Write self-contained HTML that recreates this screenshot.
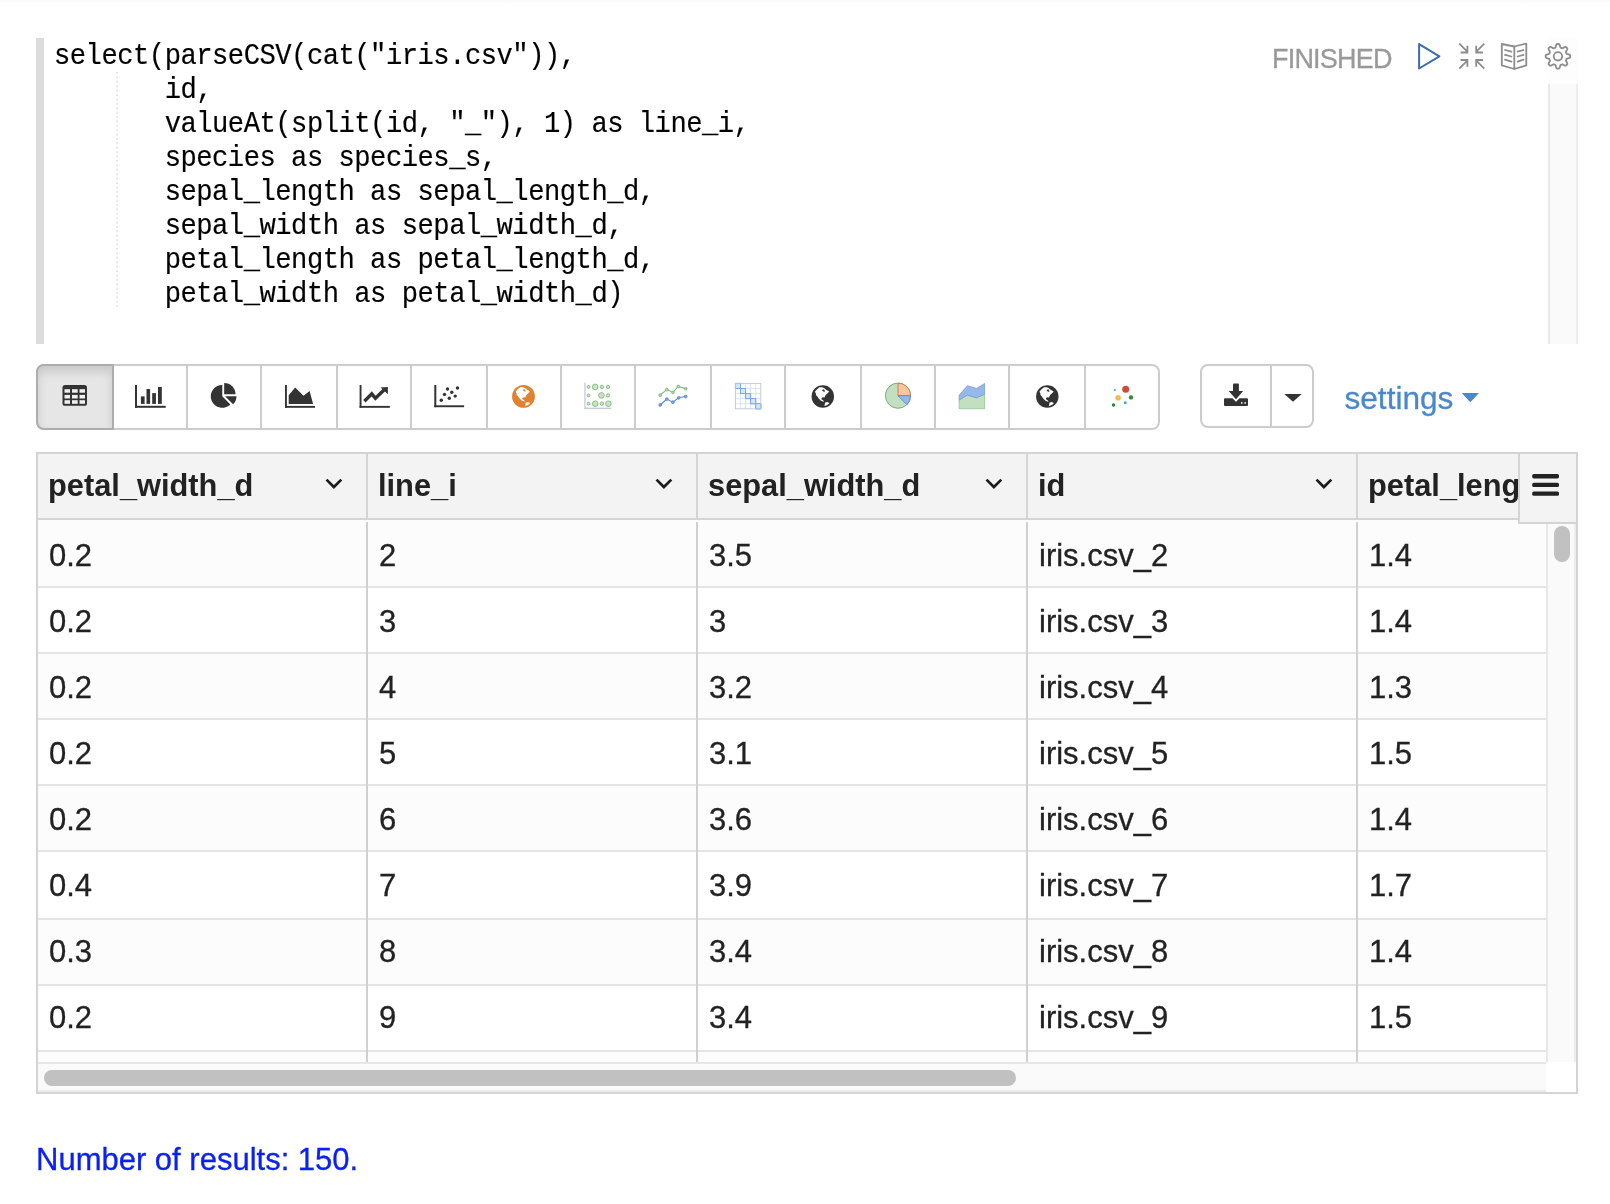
<!DOCTYPE html>
<html><head><meta charset="utf-8">
<style>
html,body{margin:0;padding:0;}
body{width:1610px;height:1204px;position:relative;overflow:hidden;background:#fff;font-family:"Liberation Sans",sans-serif;}
.a{position:absolute;}
#topshadow{left:0;top:0;width:1610px;height:6px;background:linear-gradient(#f8f8f8,#fdfdfd 3px,#fff 6px);}
#codebar{left:36px;top:38px;width:8px;height:306px;background:#dcdcdc;}
.cl{position:absolute;left:54px;height:34px;font-family:"Liberation Mono",monospace;font-size:27.2px;letter-spacing:-0.51px;line-height:34px;color:#000;white-space:pre;transform:scaleY(1.075);transform-origin:0 24px;-webkit-text-stroke:0.15px #000;}
#trackfaint{left:1548px;top:38px;width:30px;height:46px;background:#fdfdfd;}
#codetrack{left:1548px;top:84px;width:26px;height:260px;background:#fafafa;border-left:2px solid #e8e8e8;border-right:2px solid #ededed;}
#finished{left:1272px;top:41.5px;font-size:27px;line-height:34px;color:#999;letter-spacing:-0.8px;-webkit-text-stroke:0.3px #999;}
#toolbar{left:36px;top:364px;width:1120px;height:62px;border:2px solid #ccc;border-radius:8px;background:#fff;}
#activebtn{left:36px;top:364px;width:74px;height:62px;border:2px solid #adadad;border-radius:8px 0 0 8px;background:#e6e6e6;box-shadow:inset 0 6px 10px rgba(0,0,0,.125);}
.vd{position:absolute;top:366px;width:2px;height:62px;background:#ccc;}
#dlgroup{left:1200px;top:364px;width:110px;height:60px;border:2px solid #ccc;border-radius:8px;}
#settings{left:1344.5px;top:378px;font-size:31.6px;line-height:40px;color:#4a88c9;-webkit-text-stroke:0.3px #4a88c9;}
#grid{left:36px;top:452px;width:1538px;height:638px;border:2px solid #d4d4d4;background:#fff;overflow:hidden;}
.hd{position:absolute;top:454px;height:64px;background:#f3f3f3;}
.ht{position:absolute;top:466px;font-size:30.8px;line-height:40px;font-weight:bold;color:#222;white-space:nowrap;}
.ct{position:absolute;font-size:31px;line-height:40px;color:#222;white-space:nowrap;-webkit-text-stroke:0.3px #222;}
.rw{position:absolute;left:38px;width:1508px;}
.hb{position:absolute;left:38px;width:1508px;height:2px;background:#e4e4e4;}
.cd{position:absolute;width:2px;background:#d0d0d0;}
#results{left:36px;top:1139.7px;font-size:31px;line-height:40px;color:#0a20f5;-webkit-text-stroke:0.3px #0a20f5;}

#wrap{position:absolute;left:0;top:0;width:1610px;height:1204px;will-change:transform;}

</style></head>
<body>
<div id="wrap">
<div id="topshadow" class="a"></div>
<div id="codebar" class="a"></div>
<div class="cl" style="top:40px">select(parseCSV(cat("iris.csv")),</div>
<div class="cl" style="top:74px">       id,</div>
<div class="cl" style="top:108px">       valueAt(split(id, "_"), 1) as line_i,</div>
<div class="cl" style="top:142px">       species as species_s,</div>
<div class="cl" style="top:176px">       sepal_length as sepal_length_d,</div>
<div class="cl" style="top:210px">       sepal_width as sepal_width_d,</div>
<div class="cl" style="top:244px">       petal_length as petal_length_d,</div>
<div class="cl" style="top:278px">       petal_width as petal_width_d)</div>
<div id="trackfaint" class="a"></div>
<div id="codetrack" class="a"></div>
<div id="finished" class="a">FINISHED</div>
<div id="toolbar" class="a"></div>
<div id="activebtn" class="a"></div>
<div class="vd" style="left:186px"></div>
<div class="vd" style="left:260px"></div>
<div class="vd" style="left:336px"></div>
<div class="vd" style="left:410px"></div>
<div class="vd" style="left:486px"></div>
<div class="vd" style="left:560px"></div>
<div class="vd" style="left:634px"></div>
<div class="vd" style="left:710px"></div>
<div class="vd" style="left:784px"></div>
<div class="vd" style="left:860px"></div>
<div class="vd" style="left:934px"></div>
<div class="vd" style="left:1008px"></div>
<div class="vd" style="left:1084px"></div>
<div id="dlgroup" class="a"></div>
<div class="vd" style="left:1270px;height:60px"></div>
<div id="settings" class="a">settings</div>
<div id="grid" class="a"></div>
<div class="hd" style="left:38px;width:1538px"></div>
<div class="a" style="left:38px;top:518px;width:1480px;height:2px;background:#d4d4d4"></div>
<div class="rw" style="top:520px;height:66px;background:#fcfcfc"></div>
<div class="rw" style="top:588px;height:64px;background:#fff"></div>
<div class="rw" style="top:654px;height:64px;background:#fcfcfc"></div>
<div class="rw" style="top:720px;height:64px;background:#fff"></div>
<div class="rw" style="top:786px;height:64px;background:#fcfcfc"></div>
<div class="rw" style="top:852px;height:66px;background:#fff"></div>
<div class="rw" style="top:920px;height:64px;background:#fcfcfc"></div>
<div class="rw" style="top:986px;height:64px;background:#fff"></div>
<div class="rw" style="top:1052px;height:10px;background:#fcfcfc"></div>
<div class="hb" style="top:586px"></div>
<div class="hb" style="top:652px"></div>
<div class="hb" style="top:718px"></div>
<div class="hb" style="top:784px"></div>
<div class="hb" style="top:850px"></div>
<div class="hb" style="top:918px"></div>
<div class="hb" style="top:984px"></div>
<div class="hb" style="top:1050px"></div>
<div class="cd" style="left:366px;top:454px;height:64px;background:#d4d4d4"></div>
<div class="cd" style="left:366px;top:522px;height:540px"></div>
<div class="cd" style="left:696px;top:454px;height:64px;background:#d4d4d4"></div>
<div class="cd" style="left:696px;top:522px;height:540px"></div>
<div class="cd" style="left:1026px;top:454px;height:64px;background:#d4d4d4"></div>
<div class="cd" style="left:1026px;top:522px;height:540px"></div>
<div class="cd" style="left:1356px;top:454px;height:64px;background:#d4d4d4"></div>
<div class="cd" style="left:1356px;top:522px;height:540px"></div>
<div class="ht" style="left:48px;">petal_width_d</div>
<div class="ht" style="left:378px;">line_i</div>
<div class="ht" style="left:708px;">sepal_width_d</div>
<div class="ht" style="left:1038px;">id</div>
<div class="ht" style="left:1368px;width:150px;overflow:hidden;">petal_length_d</div>
<div class="ct" style="left:49px;top:535.5px">0.2</div>
<div class="ct" style="left:379px;top:535.5px">2</div>
<div class="ct" style="left:709px;top:535.5px">3.5</div>
<div class="ct" style="left:1039px;top:535.5px">iris.csv_2</div>
<div class="ct" style="left:1369px;top:535.5px">1.4</div>
<div class="ct" style="left:49px;top:601.5px">0.2</div>
<div class="ct" style="left:379px;top:601.5px">3</div>
<div class="ct" style="left:709px;top:601.5px">3</div>
<div class="ct" style="left:1039px;top:601.5px">iris.csv_3</div>
<div class="ct" style="left:1369px;top:601.5px">1.4</div>
<div class="ct" style="left:49px;top:667.5px">0.2</div>
<div class="ct" style="left:379px;top:667.5px">4</div>
<div class="ct" style="left:709px;top:667.5px">3.2</div>
<div class="ct" style="left:1039px;top:667.5px">iris.csv_4</div>
<div class="ct" style="left:1369px;top:667.5px">1.3</div>
<div class="ct" style="left:49px;top:733.5px">0.2</div>
<div class="ct" style="left:379px;top:733.5px">5</div>
<div class="ct" style="left:709px;top:733.5px">3.1</div>
<div class="ct" style="left:1039px;top:733.5px">iris.csv_5</div>
<div class="ct" style="left:1369px;top:733.5px">1.5</div>
<div class="ct" style="left:49px;top:799.5px">0.2</div>
<div class="ct" style="left:379px;top:799.5px">6</div>
<div class="ct" style="left:709px;top:799.5px">3.6</div>
<div class="ct" style="left:1039px;top:799.5px">iris.csv_6</div>
<div class="ct" style="left:1369px;top:799.5px">1.4</div>
<div class="ct" style="left:49px;top:865.5px">0.4</div>
<div class="ct" style="left:379px;top:865.5px">7</div>
<div class="ct" style="left:709px;top:865.5px">3.9</div>
<div class="ct" style="left:1039px;top:865.5px">iris.csv_7</div>
<div class="ct" style="left:1369px;top:865.5px">1.7</div>
<div class="ct" style="left:49px;top:931.5px">0.3</div>
<div class="ct" style="left:379px;top:931.5px">8</div>
<div class="ct" style="left:709px;top:931.5px">3.4</div>
<div class="ct" style="left:1039px;top:931.5px">iris.csv_8</div>
<div class="ct" style="left:1369px;top:931.5px">1.4</div>
<div class="ct" style="left:49px;top:997.5px">0.2</div>
<div class="ct" style="left:379px;top:997.5px">9</div>
<div class="ct" style="left:709px;top:997.5px">3.4</div>
<div class="ct" style="left:1039px;top:997.5px">iris.csv_9</div>
<div class="ct" style="left:1369px;top:997.5px">1.5</div>
<div class="a" style="left:1546px;top:524px;width:26px;height:538px;background:#fafafa;border-left:2px solid #e8e8e8;border-right:2px solid #ededed"></div>
<div class="a" style="left:1554px;top:526px;width:16px;height:36px;border-radius:8px;background:#c1c1c1"></div>
<div class="a" style="left:38px;top:1062px;width:1508px;height:26px;background:#fafafa;border-top:2px solid #e6e6e6;border-bottom:2px solid #ececec"></div>
<div class="a" style="left:44px;top:1070px;width:972px;height:16px;border-radius:8px;background:#c1c1c1"></div>
<div class="a" style="left:1546px;top:1062px;width:30px;height:30px;background:#fff"></div>
<div class="a" style="left:1518px;top:454px;width:56px;height:68px;background:#f3f3f3;border-left:2px solid #d4d4d4;border-bottom:2px solid #d4d4d4"></div>
<div id="results" class="a">Number of results: 150.</div>
<svg class="a" style="left:0;top:0" width="1610" height="1204" viewBox="0 0 1610 1204">
<!-- indent guide -->
<line x1="117" y1="72" x2="117" y2="307" stroke="#d2d2d2" stroke-width="1" stroke-dasharray="2 2.4"/>
<!-- play -->
<path d="M1419.1,44.1 L1439.4,56.3 L1419.1,68.5 Z" fill="none" stroke="#3a6ea8" stroke-width="2" stroke-linejoin="round"/>
<!-- compress -->
<g stroke="#8c8c8c" stroke-width="1.8" fill="none" stroke-linecap="butt">
<path d="M1459.3,43.7 L1467.3,51.7 M1467.4,45.8 L1467.4,52.5 L1460.6,52.5"/>
<path d="M1484.3,43.7 L1476.3,51.7 M1476.2,45.8 L1476.2,52.5 L1483,52.5"/>
<path d="M1459.3,68.7 L1467.3,60.7 M1460.6,60 L1467.4,60 L1467.4,66.7"/>
<path d="M1484.3,68.7 L1476.3,60.7 M1483,60 L1476.2,60 L1476.2,66.7"/>
</g>
<!-- book -->
<g stroke="#8c8c8c" stroke-width="1.8" fill="none" stroke-linejoin="round" stroke-linecap="round">
<path d="M1501.8,44 L1501.8,65.4 L1514.3,69 L1514.3,46.5 Z"/>
<path d="M1514.3,46.5 L1526.3,43.6 L1526.3,65.4 L1514.3,69"/>
<path d="M1505,50 L1511.4,51.6 M1505,54.9 L1511.4,56.5 M1505,59.7 L1511.4,61.7"/>
<path d="M1517.6,51.6 L1523.5,50 M1517.6,56.5 L1523.5,54.9 M1517.6,61.7 L1523.5,59.7"/>
</g>
<!-- gear -->
<path d="M1570.24,56.3 L1570.24,56.41 L1570.24,56.51 L1570.24,56.62 L1570.23,56.73 L1570.23,56.84 L1570.22,56.94 L1570.22,57.05 L1570.2,57.16 L1570.16,57.26 L1570.11,57.36 L1570.03,57.46 L1569.94,57.56 L1569.83,57.65 L1569.7,57.74 L1569.56,57.83 L1569.4,57.91 L1569.24,57.99 L1569.06,58.06 L1568.88,58.13 L1568.69,58.2 L1568.5,58.26 L1568.31,58.32 L1568.11,58.37 L1567.93,58.42 L1567.74,58.47 L1567.56,58.52 L1567.4,58.57 L1567.24,58.62 L1567.09,58.67 L1566.96,58.72 L1566.84,58.77 L1566.74,58.82 L1566.65,58.88 L1566.58,58.94 L1566.53,59.01 L1566.5,59.08 L1566.47,59.16 L1566.45,59.23 L1566.42,59.3 L1566.4,59.38 L1566.37,59.45 L1566.34,59.53 L1566.31,59.6 L1566.28,59.67 L1566.25,59.74 L1566.22,59.82 L1566.19,59.89 L1566.16,59.96 L1566.13,60.03 L1566.1,60.1 L1566.06,60.17 L1566.03,60.25 L1565.99,60.32 L1565.96,60.39 L1565.93,60.46 L1565.92,60.54 L1565.93,60.64 L1565.94,60.74 L1565.98,60.85 L1566.03,60.97 L1566.08,61.1 L1566.15,61.23 L1566.23,61.38 L1566.32,61.53 L1566.41,61.69 L1566.5,61.86 L1566.6,62.03 L1566.7,62.21 L1566.79,62.38 L1566.88,62.56 L1566.97,62.74 L1567.05,62.92 L1567.12,63.09 L1567.18,63.27 L1567.24,63.43 L1567.28,63.59 L1567.3,63.75 L1567.32,63.89 L1567.31,64.03 L1567.3,64.15 L1567.26,64.26 L1567.22,64.36 L1567.15,64.45 L1567.08,64.53 L1567.01,64.61 L1566.94,64.69 L1566.86,64.77 L1566.79,64.84 L1566.71,64.92 L1566.64,65 L1566.56,65.07 L1566.48,65.15 L1566.41,65.22 L1566.33,65.3 L1566.25,65.37 L1566.17,65.44 L1566.09,65.51 L1566,65.58 L1565.9,65.62 L1565.79,65.66 L1565.67,65.67 L1565.53,65.68 L1565.39,65.66 L1565.23,65.64 L1565.07,65.6 L1564.91,65.54 L1564.73,65.48 L1564.56,65.41 L1564.38,65.33 L1564.2,65.24 L1564.02,65.15 L1563.85,65.06 L1563.67,64.96 L1563.5,64.86 L1563.33,64.77 L1563.17,64.68 L1563.02,64.59 L1562.87,64.51 L1562.74,64.44 L1562.61,64.39 L1562.49,64.34 L1562.38,64.3 L1562.28,64.29 L1562.18,64.28 L1562.1,64.29 L1562.03,64.32 L1561.96,64.35 L1561.89,64.39 L1561.81,64.42 L1561.74,64.46 L1561.67,64.49 L1561.6,64.52 L1561.53,64.55 L1561.46,64.58 L1561.38,64.61 L1561.31,64.64 L1561.24,64.67 L1561.17,64.7 L1561.09,64.73 L1561.02,64.76 L1560.94,64.78 L1560.87,64.81 L1560.8,64.83 L1560.72,64.86 L1560.65,64.89 L1560.58,64.94 L1560.52,65.01 L1560.46,65.1 L1560.41,65.2 L1560.36,65.32 L1560.31,65.45 L1560.26,65.6 L1560.21,65.76 L1560.16,65.92 L1560.11,66.1 L1560.06,66.29 L1560.01,66.47 L1559.96,66.67 L1559.9,66.86 L1559.84,67.05 L1559.77,67.24 L1559.7,67.42 L1559.63,67.6 L1559.55,67.76 L1559.47,67.92 L1559.38,68.06 L1559.29,68.19 L1559.2,68.3 L1559.1,68.39 L1559,68.47 L1558.9,68.52 L1558.8,68.56 L1558.69,68.58 L1558.58,68.58 L1558.48,68.59 L1558.37,68.59 L1558.26,68.6 L1558.15,68.6 L1558.05,68.6 L1557.94,68.6 L1557.83,68.6 L1557.73,68.6 L1557.62,68.6 L1557.51,68.59 L1557.4,68.59 L1557.3,68.58 L1557.19,68.58 L1557.08,68.56 L1556.98,68.52 L1556.88,68.47 L1556.78,68.39 L1556.68,68.3 L1556.59,68.19 L1556.5,68.06 L1556.41,67.92 L1556.33,67.76 L1556.25,67.6 L1556.18,67.42 L1556.11,67.24 L1556.04,67.05 L1555.98,66.86 L1555.92,66.67 L1555.87,66.47 L1555.82,66.29 L1555.77,66.1 L1555.72,65.92 L1555.67,65.76 L1555.62,65.6 L1555.57,65.45 L1555.52,65.32 L1555.47,65.2 L1555.42,65.1 L1555.36,65.01 L1555.3,64.94 L1555.23,64.89 L1555.16,64.86 L1555.08,64.83 L1555.01,64.81 L1554.94,64.78 L1554.86,64.76 L1554.79,64.73 L1554.71,64.7 L1554.64,64.67 L1554.57,64.64 L1554.5,64.61 L1554.42,64.58 L1554.35,64.55 L1554.28,64.52 L1554.21,64.49 L1554.14,64.46 L1554.07,64.42 L1553.99,64.39 L1553.92,64.35 L1553.85,64.32 L1553.78,64.29 L1553.7,64.28 L1553.6,64.29 L1553.5,64.3 L1553.39,64.34 L1553.27,64.39 L1553.14,64.44 L1553.01,64.51 L1552.86,64.59 L1552.71,64.68 L1552.55,64.77 L1552.38,64.86 L1552.21,64.96 L1552.03,65.06 L1551.86,65.15 L1551.68,65.24 L1551.5,65.33 L1551.32,65.41 L1551.15,65.48 L1550.97,65.54 L1550.81,65.6 L1550.65,65.64 L1550.49,65.66 L1550.35,65.68 L1550.21,65.67 L1550.09,65.66 L1549.98,65.62 L1549.88,65.58 L1549.79,65.51 L1549.71,65.44 L1549.63,65.37 L1549.55,65.3 L1549.47,65.22 L1549.4,65.15 L1549.32,65.07 L1549.24,65 L1549.17,64.92 L1549.09,64.84 L1549.02,64.77 L1548.94,64.69 L1548.87,64.61 L1548.8,64.53 L1548.73,64.45 L1548.66,64.36 L1548.62,64.26 L1548.58,64.15 L1548.57,64.03 L1548.56,63.89 L1548.58,63.75 L1548.6,63.59 L1548.64,63.43 L1548.7,63.27 L1548.76,63.09 L1548.83,62.92 L1548.91,62.74 L1549,62.56 L1549.09,62.38 L1549.18,62.21 L1549.28,62.03 L1549.38,61.86 L1549.47,61.69 L1549.56,61.53 L1549.65,61.38 L1549.73,61.23 L1549.8,61.1 L1549.85,60.97 L1549.9,60.85 L1549.94,60.74 L1549.95,60.64 L1549.96,60.54 L1549.95,60.46 L1549.92,60.39 L1549.89,60.32 L1549.85,60.25 L1549.82,60.17 L1549.78,60.1 L1549.75,60.03 L1549.72,59.96 L1549.69,59.89 L1549.66,59.82 L1549.63,59.74 L1549.6,59.67 L1549.57,59.6 L1549.54,59.53 L1549.51,59.45 L1549.48,59.38 L1549.46,59.3 L1549.43,59.23 L1549.41,59.16 L1549.38,59.08 L1549.35,59.01 L1549.3,58.94 L1549.23,58.88 L1549.14,58.82 L1549.04,58.77 L1548.92,58.72 L1548.79,58.67 L1548.64,58.62 L1548.48,58.57 L1548.32,58.52 L1548.14,58.47 L1547.95,58.42 L1547.77,58.37 L1547.57,58.32 L1547.38,58.26 L1547.19,58.2 L1547,58.13 L1546.82,58.06 L1546.64,57.99 L1546.48,57.91 L1546.32,57.83 L1546.18,57.74 L1546.05,57.65 L1545.94,57.56 L1545.85,57.46 L1545.77,57.36 L1545.72,57.26 L1545.68,57.16 L1545.66,57.05 L1545.66,56.94 L1545.65,56.84 L1545.65,56.73 L1545.64,56.62 L1545.64,56.51 L1545.64,56.41 L1545.64,56.3 L1545.64,56.19 L1545.64,56.09 L1545.64,55.98 L1545.65,55.87 L1545.65,55.76 L1545.66,55.66 L1545.66,55.55 L1545.68,55.44 L1545.72,55.34 L1545.77,55.24 L1545.85,55.14 L1545.94,55.04 L1546.05,54.95 L1546.18,54.86 L1546.32,54.77 L1546.48,54.69 L1546.64,54.61 L1546.82,54.54 L1547,54.47 L1547.19,54.4 L1547.38,54.34 L1547.57,54.28 L1547.77,54.23 L1547.95,54.18 L1548.14,54.13 L1548.32,54.08 L1548.48,54.03 L1548.64,53.98 L1548.79,53.93 L1548.92,53.88 L1549.04,53.83 L1549.14,53.78 L1549.23,53.72 L1549.3,53.66 L1549.35,53.59 L1549.38,53.52 L1549.41,53.44 L1549.43,53.37 L1549.46,53.3 L1549.48,53.22 L1549.51,53.15 L1549.54,53.07 L1549.57,53 L1549.6,52.93 L1549.63,52.86 L1549.66,52.78 L1549.69,52.71 L1549.72,52.64 L1549.75,52.57 L1549.78,52.5 L1549.82,52.43 L1549.85,52.35 L1549.89,52.28 L1549.92,52.21 L1549.95,52.14 L1549.96,52.06 L1549.95,51.96 L1549.94,51.86 L1549.9,51.75 L1549.85,51.63 L1549.8,51.5 L1549.73,51.37 L1549.65,51.22 L1549.56,51.07 L1549.47,50.91 L1549.38,50.74 L1549.28,50.57 L1549.18,50.39 L1549.09,50.22 L1549,50.04 L1548.91,49.86 L1548.83,49.68 L1548.76,49.51 L1548.7,49.33 L1548.64,49.17 L1548.6,49.01 L1548.58,48.85 L1548.56,48.71 L1548.57,48.57 L1548.58,48.45 L1548.62,48.34 L1548.66,48.24 L1548.73,48.15 L1548.8,48.07 L1548.87,47.99 L1548.94,47.91 L1549.02,47.83 L1549.09,47.76 L1549.17,47.68 L1549.24,47.6 L1549.32,47.53 L1549.4,47.45 L1549.47,47.38 L1549.55,47.3 L1549.63,47.23 L1549.71,47.16 L1549.79,47.09 L1549.88,47.02 L1549.98,46.98 L1550.09,46.94 L1550.21,46.93 L1550.35,46.92 L1550.49,46.94 L1550.65,46.96 L1550.81,47 L1550.97,47.06 L1551.15,47.12 L1551.32,47.19 L1551.5,47.27 L1551.68,47.36 L1551.86,47.45 L1552.03,47.54 L1552.21,47.64 L1552.38,47.74 L1552.55,47.83 L1552.71,47.92 L1552.86,48.01 L1553.01,48.09 L1553.14,48.16 L1553.27,48.21 L1553.39,48.26 L1553.5,48.3 L1553.6,48.31 L1553.7,48.32 L1553.78,48.31 L1553.85,48.28 L1553.92,48.25 L1553.99,48.21 L1554.07,48.18 L1554.14,48.14 L1554.21,48.11 L1554.28,48.08 L1554.35,48.05 L1554.42,48.02 L1554.5,47.99 L1554.57,47.96 L1554.64,47.93 L1554.71,47.9 L1554.79,47.87 L1554.86,47.84 L1554.94,47.82 L1555.01,47.79 L1555.08,47.77 L1555.16,47.74 L1555.23,47.71 L1555.3,47.66 L1555.36,47.59 L1555.42,47.5 L1555.47,47.4 L1555.52,47.28 L1555.57,47.15 L1555.62,47 L1555.67,46.84 L1555.72,46.68 L1555.77,46.5 L1555.82,46.31 L1555.87,46.13 L1555.92,45.93 L1555.98,45.74 L1556.04,45.55 L1556.11,45.36 L1556.18,45.18 L1556.25,45 L1556.33,44.84 L1556.41,44.68 L1556.5,44.54 L1556.59,44.41 L1556.68,44.3 L1556.78,44.21 L1556.88,44.13 L1556.98,44.08 L1557.08,44.04 L1557.19,44.02 L1557.3,44.02 L1557.4,44.01 L1557.51,44.01 L1557.62,44 L1557.73,44 L1557.83,44 L1557.94,44 L1558.05,44 L1558.15,44 L1558.26,44 L1558.37,44.01 L1558.48,44.01 L1558.58,44.02 L1558.69,44.02 L1558.8,44.04 L1558.9,44.08 L1559,44.13 L1559.1,44.21 L1559.2,44.3 L1559.29,44.41 L1559.38,44.54 L1559.47,44.68 L1559.55,44.84 L1559.63,45 L1559.7,45.18 L1559.77,45.36 L1559.84,45.55 L1559.9,45.74 L1559.96,45.93 L1560.01,46.13 L1560.06,46.31 L1560.11,46.5 L1560.16,46.68 L1560.21,46.84 L1560.26,47 L1560.31,47.15 L1560.36,47.28 L1560.41,47.4 L1560.46,47.5 L1560.52,47.59 L1560.58,47.66 L1560.65,47.71 L1560.72,47.74 L1560.8,47.77 L1560.87,47.79 L1560.94,47.82 L1561.02,47.84 L1561.09,47.87 L1561.17,47.9 L1561.24,47.93 L1561.31,47.96 L1561.38,47.99 L1561.46,48.02 L1561.53,48.05 L1561.6,48.08 L1561.67,48.11 L1561.74,48.14 L1561.81,48.18 L1561.89,48.21 L1561.96,48.25 L1562.03,48.28 L1562.1,48.31 L1562.18,48.32 L1562.28,48.31 L1562.38,48.3 L1562.49,48.26 L1562.61,48.21 L1562.74,48.16 L1562.87,48.09 L1563.02,48.01 L1563.17,47.92 L1563.33,47.83 L1563.5,47.74 L1563.67,47.64 L1563.85,47.54 L1564.02,47.45 L1564.2,47.36 L1564.38,47.27 L1564.56,47.19 L1564.73,47.12 L1564.91,47.06 L1565.07,47 L1565.23,46.96 L1565.39,46.94 L1565.53,46.92 L1565.67,46.93 L1565.79,46.94 L1565.9,46.98 L1566,47.02 L1566.09,47.09 L1566.17,47.16 L1566.25,47.23 L1566.33,47.3 L1566.41,47.38 L1566.48,47.45 L1566.56,47.53 L1566.64,47.6 L1566.71,47.68 L1566.79,47.76 L1566.86,47.83 L1566.94,47.91 L1567.01,47.99 L1567.08,48.07 L1567.15,48.15 L1567.22,48.24 L1567.26,48.34 L1567.3,48.45 L1567.31,48.57 L1567.32,48.71 L1567.3,48.85 L1567.28,49.01 L1567.24,49.17 L1567.18,49.33 L1567.12,49.51 L1567.05,49.68 L1566.97,49.86 L1566.88,50.04 L1566.79,50.22 L1566.7,50.39 L1566.6,50.57 L1566.5,50.74 L1566.41,50.91 L1566.32,51.07 L1566.23,51.22 L1566.15,51.37 L1566.08,51.5 L1566.03,51.63 L1565.98,51.75 L1565.94,51.86 L1565.93,51.96 L1565.92,52.06 L1565.93,52.14 L1565.96,52.21 L1565.99,52.28 L1566.03,52.35 L1566.06,52.43 L1566.1,52.5 L1566.13,52.57 L1566.16,52.64 L1566.19,52.71 L1566.22,52.78 L1566.25,52.86 L1566.28,52.93 L1566.31,53 L1566.34,53.07 L1566.37,53.15 L1566.4,53.22 L1566.42,53.3 L1566.45,53.37 L1566.47,53.44 L1566.5,53.52 L1566.53,53.59 L1566.58,53.66 L1566.65,53.72 L1566.74,53.78 L1566.84,53.83 L1566.96,53.88 L1567.09,53.93 L1567.24,53.98 L1567.4,54.03 L1567.56,54.08 L1567.74,54.13 L1567.93,54.18 L1568.11,54.23 L1568.31,54.28 L1568.5,54.34 L1568.69,54.4 L1568.88,54.47 L1569.06,54.54 L1569.24,54.61 L1569.4,54.69 L1569.56,54.77 L1569.7,54.86 L1569.83,54.95 L1569.94,55.04 L1570.03,55.14 L1570.11,55.24 L1570.16,55.34 L1570.2,55.44 L1570.22,55.55 L1570.22,55.66 L1570.23,55.76 L1570.23,55.87 L1570.24,55.98 L1570.24,56.09 L1570.24,56.19 Z" fill="none" stroke="#8c8c8c" stroke-width="1.8" stroke-linejoin="round"/>
<circle cx="1557.94" cy="56.3" r="4.2" fill="none" stroke="#8c8c8c" stroke-width="1.8"/>
</svg>
<svg class="a" style="left:0;top:0" width="1610" height="1204" viewBox="0 0 1610 1204">
<!-- table icon -->
<rect x="62.5" y="385" width="24.5" height="20.8" rx="2.6" fill="#333"/>
<g fill="#f0f0f0">
<rect x="64.5" y="389.2" width="5.5" height="3.5"/><rect x="72" y="389.2" width="5.7" height="3.5"/><rect x="79.5" y="389.2" width="5.5" height="3.5"/>
<rect x="64.5" y="394.9" width="5.5" height="3.6"/><rect x="72" y="394.9" width="5.7" height="3.6"/><rect x="79.5" y="394.9" width="5.5" height="3.6"/>
<rect x="64.5" y="400.2" width="5.5" height="3.6"/><rect x="72" y="400.2" width="5.7" height="3.6"/><rect x="79.5" y="400.2" width="5.5" height="3.6"/>
</g>
<g fill="#333">
<!-- bar chart -->
<rect x="135" y="385" width="2" height="22.8"/><rect x="135" y="405.8" width="30.7" height="2"/>
<rect x="140.9" y="396.4" width="3.7" height="7.5"/><rect x="146.5" y="389" width="3.6" height="14.9"/><rect x="152.2" y="393.1" width="3.7" height="10.8"/><rect x="158" y="387" width="3.8" height="16.9"/>
<!-- pie -->
<path d="M222.27,396.35 L230.35,404.43 A11.46,11.46 0 1 1 222.27,384.89 Z"/>
<path d="M224.16,394.36 L224.16,383 A11.37,11.37 0 0 1 235.53,394.36 Z"/>
<path d="M225.03,396.26 L236.47,396.26 A11.44,11.44 0 0 1 233.12,404.35 Z"/>
<!-- area -->
<rect x="285" y="385" width="1.9" height="22.8"/><rect x="285" y="405.9" width="30" height="1.9"/>
<path d="M288.7,395.3 L295.2,387.4 L303.5,395.7 L309.6,390.9 L313.1,403.9 L288.7,403.9 Z"/>
<!-- line -->
<rect x="359.6" y="385" width="1.9" height="22.8"/><rect x="359.6" y="405.9" width="30.3" height="1.9"/>
<path d="M380.5,387.4 L387.9,386.9 L387.9,394.3 Z"/>
<!-- scatter -->
<rect x="434.3" y="385" width="2" height="22.2"/><rect x="434.3" y="405.3" width="29.8" height="1.9"/>
<circle cx="441.3" cy="400.3" r="1.7"/><circle cx="444.5" cy="394.4" r="1.7"/><circle cx="447.5" cy="389" r="1.7"/><circle cx="449.3" cy="398.3" r="1.7"/><circle cx="451.8" cy="392.2" r="1.7"/><circle cx="455.2" cy="396.1" r="1.7"/><circle cx="457.5" cy="388" r="1.7"/>
</g>
<polyline points="364.4,401.3 371.8,393.9 375.4,398.3 384.8,389.2" fill="none" stroke="#333" stroke-width="3.4" stroke-linejoin="miter"/>
<!-- orange globe -->
<g transform="translate(523.5,396.4)"><circle r="11.4" fill="#e0822f"/><path fill="#fff" fill-rule="evenodd" d="M-7.90,-4.70 L-6.23,-6.87 L-3.40,-9.19 L-0.82,-9.32 L1.24,-8.42 L3.30,-6.87 L6.39,-5.07 L4.84,-3.27 L3.30,-1.98 L2.27,-0.44 L1.75,1.11 L0.46,0.85 L-1.08,1.36 L-1.34,2.65 L-0.05,3.42 L0.72,4.20 L1.24,5.23 L0.21,4.97 L-1.85,4.20 L-3.91,2.14 L-5.46,0.08 L-6.75,-1.47 L-7.00,-3.27 Z M-0.57,-6.62 L0.98,-7.13 L1.75,-6.36 L2.00,-4.56 L0.72,-5.07 L-0.44,-5.59 Z M2.27,5.99 L4.33,5.48 L6.64,6.51 L5.61,7.80 L3.30,9.09 L1.49,9.47 L2.00,7.80 Z"/></g>
<!-- bubble -->
<rect x="584.3" y="382.6" width="1.3" height="26.5" fill="#c5cad8"/><rect x="584.3" y="407.6" width="27" height="1.5" fill="#c5cad8"/>
<g fill="#c7e5c2" stroke="#7ab176" stroke-width="0.8">
<circle cx="588.5" cy="386.9" r="1.4"/><circle cx="595.2" cy="386.9" r="2.8"/><circle cx="601.9" cy="386.9" r="1.7"/><circle cx="608" cy="386.9" r="1.7"/>
<circle cx="588.5" cy="395.4" r="1.4"/><circle cx="601.4" cy="395.4" r="2.8"/><circle cx="608" cy="395.4" r="1.7"/>
<circle cx="588.5" cy="403.7" r="1.4"/><circle cx="595.2" cy="403.7" r="2.8"/><circle cx="601.9" cy="403.7" r="1.7"/><circle cx="608.4" cy="403.7" r="2.8"/>
</g>
<!-- two lines -->
<g fill="none" stroke-width="1.1">
<polyline points="660.2,395.2 666.8,389.6 672.9,392.4 678.3,386.5 685.7,388.7" stroke="#7eb87c"/>
<polyline points="660.2,405 666.8,399.1 672.9,402.2 678.7,397.8 685.7,396.5" stroke="#5a88d8"/>
</g>
<g fill="#a9d3a7" stroke="#7eb87c" stroke-width="0.8"><circle cx="660.2" cy="395.2" r="1.4"/><circle cx="666.8" cy="389.6" r="1.4"/><circle cx="672.9" cy="392.4" r="1.4"/><circle cx="678.3" cy="386.5" r="1.4"/><circle cx="685.7" cy="388.7" r="1.4"/></g>
<g fill="#7aa2e6" stroke="#5a88d8" stroke-width="0.8"><circle cx="660.2" cy="405" r="1.4"/><circle cx="666.8" cy="399.1" r="1.4"/><circle cx="672.9" cy="402.2" r="1.4"/><circle cx="678.7" cy="397.8" r="1.4"/><circle cx="685.7" cy="396.5" r="1.4"/></g>
<!-- grid -->
<g transform="translate(735.4,383.4)">
<g fill="#cfe6fb" stroke="#7aa3d8" stroke-width="0.9"><rect x="0" y="0" width="5.08" height="5.08"/><rect x="5.08" y="5.08" width="5.08" height="5.08"/><rect x="10.16" y="10.16" width="5.08" height="5.08"/><rect x="15.24" y="15.24" width="5.08" height="5.08"/><rect x="20.32" y="20.32" width="5.08" height="5.08"/></g>
<g stroke="#d3deee" stroke-width="0.8" fill="none"><path d="M5.08,0 V25.4 M10.16,0 V25.4 M15.24,0 V25.4 M20.32,0 V25.4 M0,5.08 H25.4 M0,10.16 H25.4 M0,15.24 H25.4 M0,20.32 H25.4"/></g>
<g fill="#cfe6fb" stroke="#7aa3d8" stroke-width="0.9"><rect x="0" y="0" width="5.08" height="5.08"/><rect x="5.08" y="5.08" width="5.08" height="5.08"/><rect x="10.16" y="10.16" width="5.08" height="5.08"/><rect x="15.24" y="15.24" width="5.08" height="5.08"/><rect x="20.32" y="20.32" width="5.08" height="5.08"/></g>
<rect x="0" y="0" width="25.4" height="25.4" fill="none" stroke="#b9c8de" stroke-width="0.9"/>
</g>
<!-- black globe 1 -->
<g transform="translate(822.8,396.5)"><circle r="11.2" fill="#333"/><path fill="#fff" fill-rule="evenodd" d="M-7.90,-4.70 L-6.23,-6.87 L-3.40,-9.19 L-0.82,-9.32 L1.24,-8.42 L3.30,-6.87 L6.39,-5.07 L4.84,-3.27 L3.30,-1.98 L2.27,-0.44 L1.75,1.11 L0.46,0.85 L-1.08,1.36 L-1.34,2.65 L-0.05,3.42 L0.72,4.20 L1.24,5.23 L0.21,4.97 L-1.85,4.20 L-3.91,2.14 L-5.46,0.08 L-6.75,-1.47 L-7.00,-3.27 Z M-0.57,-6.62 L0.98,-7.13 L1.75,-6.36 L2.00,-4.56 L0.72,-5.07 L-0.44,-5.59 Z M2.27,5.99 L4.33,5.48 L6.64,6.51 L5.61,7.80 L3.30,9.09 L1.49,9.47 L2.00,7.80 Z"/></g>
<!-- colored pie -->
<g transform="translate(898,395.7)" stroke-width="0.9">
<circle r="12.6" fill="#c2dfc0" stroke="#6fa56e"/>
<path d="M0,0 L0,-12.6 A12.6,12.6 0 0 1 12.6,0 Z" fill="#f6c8a0" stroke="#c4784a"/>
<path d="M0,0 L12.6,0 A12.6,12.6 0 0 1 8.91,8.91 Z" fill="#95b8eb" stroke="#5d87d5"/>
</g>
<!-- colored area -->
<path d="M959.1,400 L967.4,395.2 L976.5,397.8 L984.6,394.3 L984.6,408.7 L959.1,408.7 Z" fill="#c2dfc0" stroke="#8cbf8a" stroke-width="0.7"/>
<path d="M959.1,395.2 L967.4,385.7 L976.5,388.5 L984.6,383.5 L984.6,394.3 L976.5,397.8 L967.4,395.2 L959.1,400 Z" fill="#95b8eb" stroke="#6d95dc" stroke-width="0.7"/>
<!-- black globe 2 -->
<g transform="translate(1047.3,396.5)"><circle r="11.2" fill="#333"/><path fill="#fff" fill-rule="evenodd" d="M-7.90,-4.70 L-6.23,-6.87 L-3.40,-9.19 L-0.82,-9.32 L1.24,-8.42 L3.30,-6.87 L6.39,-5.07 L4.84,-3.27 L3.30,-1.98 L2.27,-0.44 L1.75,1.11 L0.46,0.85 L-1.08,1.36 L-1.34,2.65 L-0.05,3.42 L0.72,4.20 L1.24,5.23 L0.21,4.97 L-1.85,4.20 L-3.91,2.14 L-5.46,0.08 L-6.75,-1.47 L-7.00,-3.27 Z M-0.57,-6.62 L0.98,-7.13 L1.75,-6.36 L2.00,-4.56 L0.72,-5.07 L-0.44,-5.59 Z M2.27,5.99 L4.33,5.48 L6.64,6.51 L5.61,7.80 L3.30,9.09 L1.49,9.47 L2.00,7.80 Z"/></g>
<!-- colored dots -->
<circle cx="1125.7" cy="389.3" r="3.5" fill="#d24a34"/>
<circle cx="1118.1" cy="397.8" r="2.8" fill="#efbf55"/>
<circle cx="1131" cy="397.4" r="2.2" fill="#3a8a3c"/>
<circle cx="1114.8" cy="390" r="1.1" fill="#4aa6cf"/>
<circle cx="1125.2" cy="402.8" r="1.5" fill="#4aa6cf"/>
<circle cx="1113.5" cy="405" r="1.7" fill="#2f7d33"/>
<!-- download -->
<g fill="#333">
<rect x="1233" y="383.4" width="5.9" height="8.5" rx="1"/>
<path d="M1228.7,391 L1243.2,391 L1236,399.2 Z"/>
<path d="M1225,398.2 L1232.5,398.2 L1236,401.8 L1239.5,398.2 L1247,398.2 Q1248,398.2 1248,399.2 L1248,405 Q1248,406 1247,406 L1225,406 Q1224,406 1224,405 L1224,399.2 Q1224,398.2 1225,398.2 Z"/>
</g>
<rect x="1241" y="402.2" width="1.5" height="1.5" fill="#fff"/><rect x="1244.4" y="402.2" width="1.5" height="1.5" fill="#fff"/>
<path d="M1284.3,394 L1301.7,394 L1293,401.8 Z" fill="#333"/>
<!-- settings caret -->
<path d="M1461.7,392.9 L1479,392.9 L1470.35,402.3 Z" fill="#4a88c9"/>
<!-- header chevrons -->
<g fill="none" stroke="#1c1c1c" stroke-width="2.7">
<polyline points="326.5,479.6 333.9,487 341.3,479.6"/>
<polyline points="656.5,479.6 663.9,487 671.3,479.6"/>
<polyline points="986.5,479.6 993.9,487 1001.3,479.6"/>
<polyline points="1316.5,479.6 1323.9,487 1331.3,479.6"/>
</g>
<!-- hamburger -->
<g fill="#222"><rect x="1532.2" y="474" width="26.8" height="4.4" rx="1.6"/><rect x="1532.2" y="482.7" width="26.8" height="4.4" rx="1.6"/><rect x="1532.2" y="491.4" width="26.8" height="4.4" rx="1.6"/></g>
</svg>

</div>
</body></html>
